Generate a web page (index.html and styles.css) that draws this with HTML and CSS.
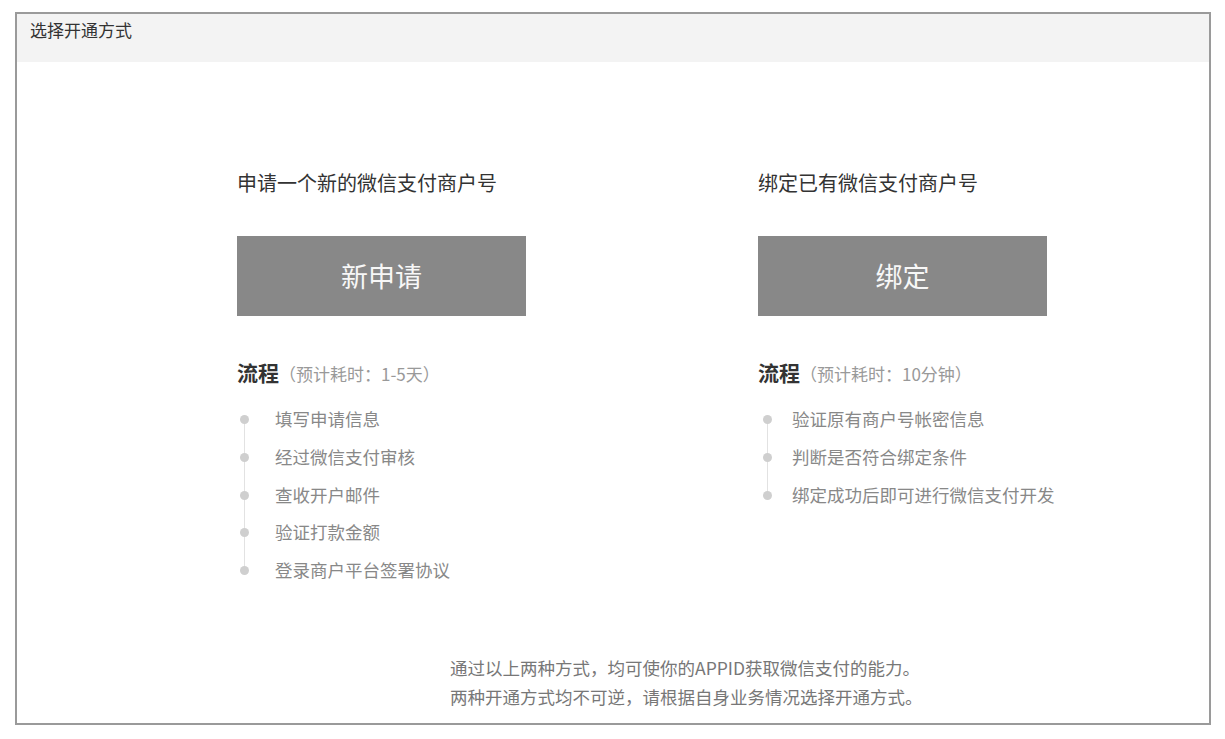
FILE: index.html
```html
<!DOCTYPE html>
<html lang="zh-CN">
<head>
<meta charset="utf-8">
<title>选择开通方式</title>
<link rel="stylesheet" href="styles.css">
</head>
<body>
<div class="frame">
  <div class="header">选择开通方式</div>
  <div class="content">
    <div class="col">
      <div class="heading">申请一个新的微信支付商户号</div>
      <div class="btn">新申请</div>
      <div class="flow"><span class="flow-title">流程</span><span class="flow-time">（预计耗时：1-5天）</span></div>
      <ul class="steps">
        <li>填写申请信息</li>
        <li>经过微信支付审核</li>
        <li>查收开户邮件</li>
        <li>验证打款金额</li>
        <li>登录商户平台签署协议</li>
      </ul>
    </div>
    <div class="col">
      <div class="heading">绑定已有微信支付商户号</div>
      <div class="btn">绑定</div>
      <div class="flow"><span class="flow-title">流程</span><span class="flow-time">（预计耗时：10分钟）</span></div>
      <ul class="steps steps-right">
        <li>验证原有商户号帐密信息</li>
        <li>判断是否符合绑定条件</li>
        <li>绑定成功后即可进行微信支付开发</li>
      </ul>
    </div>
  </div>
  <div class="footer">
    <p>通过以上两种方式，均可使你的APPID获取微信支付的能力。</p>
    <p>两种开通方式均不可逆，请根据自身业务情况选择开通方式。</p>
  </div>
</div>
</body>
</html>
```

FILE: styles.css
```css
html, body {
  margin: 0;
  padding: 0;
  background: #fff;
}
body {
  font-family: "Noto Sans CJK SC", "Noto Sans", sans-serif;
  color: #333;
  text-spacing-trim: space-all;
}
.frame {
  box-sizing: border-box;
  margin: 12px 0 0 15px;
  width: 1196px;
  height: 713px;
  border: 2px solid #9a9a9a;
  display: flex;
  flex-direction: column;
}
.header {
  height: 48px;
  background: #f3f3f3;
  box-sizing: border-box;
  padding: 4px 0 0 13px;
  font-size: 17px;
  line-height: 24px;
  color: #333;
}
.content {
  flex: 1;
  display: grid;
  grid-template-columns: 521px 400px;
  padding: 109px 0 0 220px;
}
.col {
  display: flex;
  flex-direction: column;
}
.heading {
  font-size: 20px;
  line-height: 24px;
  color: #333;
}
.btn {
  margin-top: 41px;
  width: 289px;
  height: 80px;
  background: #888;
  color: #f7f7f7;
  font-size: 27px;
  line-height: 80px;
  text-align: center;
}
.flow {
  margin-top: 43px;
  line-height: 26px;
  display: flex;
  align-items: baseline;
}
.flow-title {
  font-size: 21px;
  font-weight: bold;
  color: #333;
}
.flow-time {
  font-size: 17px;
  color: #999;
}
.steps {
  list-style: none;
  margin: 13px 0 0;
  padding: 0;
  position: relative;
}
.steps::before {
  content: "";
  position: absolute;
  left: 7px;
  top: 19px;
  bottom: 19px;
  width: 1px;
  background: #e2e2e2;
}
.steps li {
  position: relative;
  height: 37.75px;
  line-height: 37.75px;
  padding-left: 38px;
  font-size: 17.5px;
  color: #888;
}
.steps li::before {
  content: "";
  position: absolute;
  left: 3px;
  top: 15px;
  width: 9px;
  height: 9px;
  border-radius: 50%;
  background: #cfcfcf;
}
.steps-right::before {
  left: 9px;
}
.steps-right li {
  padding-left: 34px;
}
.steps-right li::before {
  left: 5px;
}
.footer {
  padding: 0 0 12px 433px;
}
.footer p {
  margin: 0;
  font-size: 17.5px;
  line-height: 29px;
  color: #777;
}
```
